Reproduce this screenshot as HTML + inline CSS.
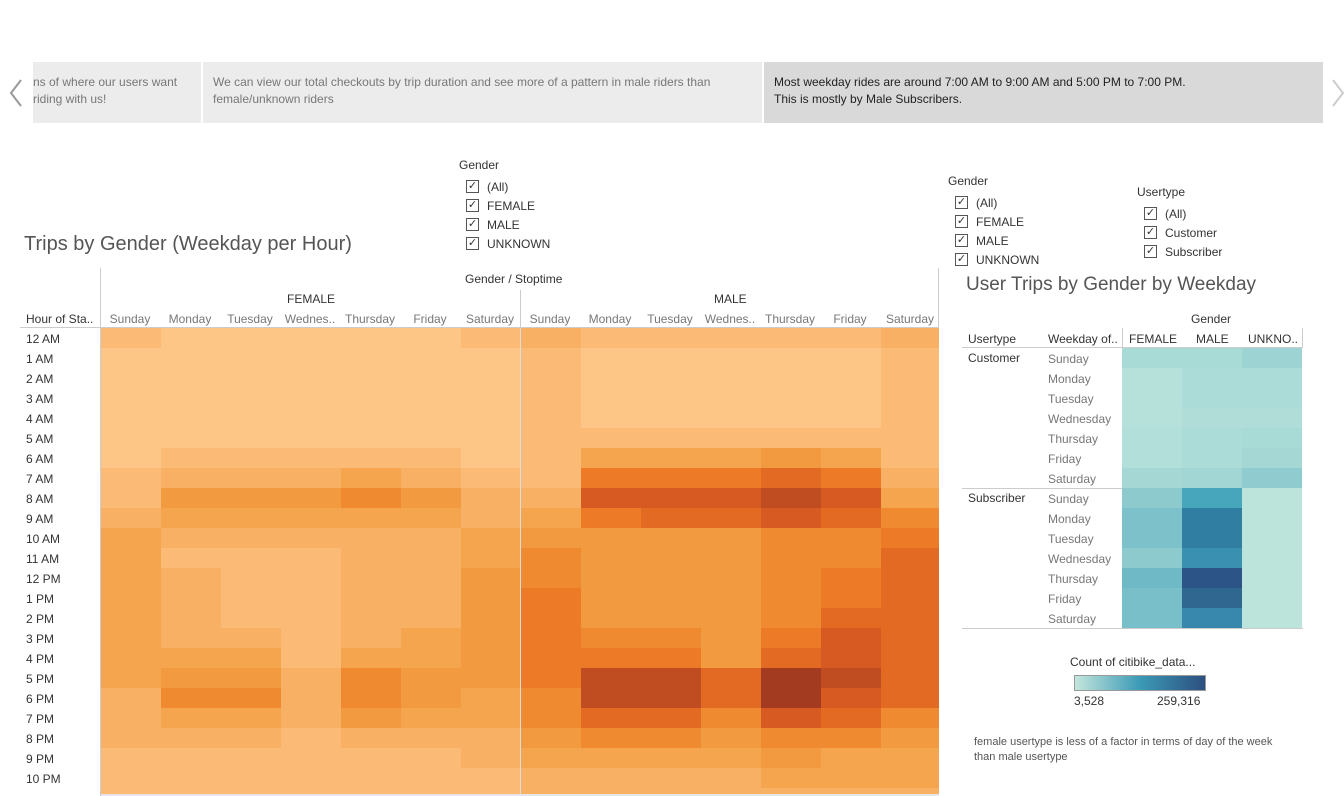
<!DOCTYPE html>
<html><head><meta charset="utf-8"><style>
*{margin:0;padding:0;box-sizing:border-box}
body{width:1344px;height:796px;background:#fff;font-family:"Liberation Sans",sans-serif;position:relative;overflow:hidden;color:#333}
.a{position:absolute;white-space:nowrap}
.s{font-size:12px;color:#333}
.g{font-size:12px;color:#777}
.cb{position:absolute;width:13px;height:13px;border:1px solid #555;background:#fff;font-size:11px;line-height:11px;text-align:center;color:#333}
.cell{position:absolute}
</style></head><body>
<div class="a" style="left:33px;top:62px;width:168px;height:61px;background:#ececec"></div>
<div class="a" style="left:203px;top:62px;width:559px;height:61px;background:#ececec"></div>
<div class="a" style="left:764px;top:62px;width:559px;height:61px;background:#d9d9d9"></div>
<svg class="a" style="left:8px;top:78px" width="16" height="30"><path d="M13 2 L3 15 L13 28" stroke="#999" stroke-width="2" fill="none"/></svg>
<svg class="a" style="left:1330px;top:78px" width="16" height="30"><path d="M3 2 L13 15 L3 28" stroke="#ccc" stroke-width="2" fill="none"/></svg>
<div class="a g" style="left:33px;top:74px;line-height:17px;width:165px;overflow:hidden">ns of where our users want<br>riding with us!</div>
<div class="a g" style="left:213px;top:74px;line-height:17px">We can view our total checkouts by trip duration and see more of a pattern in male riders than<br>female/unknown riders</div>
<div class="a s" style="left:774px;top:74px;line-height:17px;color:#222">Most weekday rides are around 7:00 AM to 9:00 AM and 5:00 PM to 7:00 PM.<br>This is mostly by Male Subscribers.</div>

<div class="a" style="left:24px;top:233px;font-size:20px;color:#555">Trips by Gender (Weekday per Hour)</div>
<div class="a s" style="left:459px;top:158px">Gender</div>
<div id="f1"></div>
<div class="a s" style="left:948px;top:174px">Gender</div>
<div class="a s" style="left:1137px;top:185px">Usertype</div>
<div class="a" style="left:966px;top:274px;font-size:19px;color:#555">User Trips by Gender by Weekday</div>

<div class="a s" style="left:465px;top:272px">Gender / Stoptime</div>
<div class="a" style="left:100px;top:268px;width:1px;height:60px;background:#ccc"></div>
<div class="a" style="left:520px;top:290px;width:1px;height:38px;background:#ccc"></div>
<div class="a" style="left:938px;top:268px;width:1px;height:60px;background:#ccc"></div>
<div class="a s" style="left:287px;top:292px">FEMALE</div>
<div class="a s" style="left:714px;top:292px">MALE</div>
<div class="a s" style="left:26px;top:312px">Hour of Sta..</div>
<div class="a" style="left:20px;top:327px;width:918px;height:1px;background:#ccc"></div>
<div id="hm"></div>

<div class="a s" style="left:1191px;top:312px">Gender</div>
<div class="a s" style="left:968px;top:332px">Usertype</div>
<div class="a s" style="left:1048px;top:332px">Weekday of..</div>
<div class="a s" style="left:1129px;top:332px">FEMALE</div>
<div class="a s" style="left:1196px;top:332px">MALE</div>
<div class="a s" style="left:1248px;top:332px">UNKNO..</div>
<div class="a" style="left:962px;top:347px;width:340px;height:1px;background:#ccc"></div>
<div class="a" style="left:1122px;top:328px;width:1px;height:20px;background:#ccc"></div>
<div class="a" style="left:1302px;top:328px;width:1px;height:20px;background:#ccc"></div>
<div class="a s" style="left:968px;top:351px">Customer</div>
<div class="a s" style="left:968px;top:491px">Subscriber</div>
<div class="a" style="left:962px;top:488px;width:160px;height:1px;background:#ccc"></div>
<div class="a" style="left:962px;top:628px;width:341px;height:1px;background:#ccc"></div>
<div id="ut"></div>

<div class="a s" style="left:1070px;top:655px">Count of citibike_data...</div>
<div class="a" style="left:1074px;top:675px;width:132px;height:16px;border:1px solid #999;background:linear-gradient(to right,#c3e6dc,#3b9ab6,#2c4f80)"></div>
<div class="a s" style="left:1074px;top:694px">3,528</div>
<div class="a s" style="left:1157px;top:694px">259,316</div>
<div class="a" style="left:974px;top:735px;font-size:11px;color:#555;line-height:15px">female usertype is less of a factor in terms of day of the week<br>than male usertype</div>

<script>
function cbs(x,y,labels){var h='';labels.forEach(function(l,i){h+='<div class="cb" style="left:'+x+'px;top:'+(y+i*19)+'px">&#10003;</div><div class="a s" style="left:'+(x+21)+'px;top:'+(y+i*19)+'px">'+l+'</div>';});return h;}
var out='';
out+=cbs(466,180,['(All)','FEMALE','MALE','UNKNOWN']);
out+=cbs(955,196,['(All)','FEMALE','MALE','UNKNOWN']);
out+=cbs(1144,207,['(All)','Customer','Subscriber']);
document.getElementById('f1').innerHTML=out;

var C=['#fdc586','#fbbb77','#f8b064','#f5a54e','#f29a3f','#f08a30','#ec7a26','#e26a22','#d65a22','#c04c22','#a33b20'];
var F=[[1,0,0,0,0,0,1],[0,0,0,0,0,0,0],[0,0,0,0,0,0,0],[0,0,0,0,0,0,0],[0,0,0,0,0,0,0],[0,0,0,0,0,0,0],[0,1,1,1,1,1,0],[1,2,2,2,3,2,1],[1,4,4,4,5,4,2],[2,3,3,3,3,3,2],[3,2,2,2,2,2,3],[3,1,1,1,2,2,3],[3,2,1,1,2,2,4],[3,2,1,1,2,2,4],[3,2,1,1,2,2,4],[3,2,2,1,2,3,4],[3,3,3,1,3,3,4],[3,4,4,2,5,4,4],[2,5,5,2,5,4,3],[2,3,3,2,4,3,3],[2,2,2,1,2,2,2],[1,1,1,1,1,1,2],[1,1,1,1,1,1,1],[1,1,1,1,1,1,1]];
var M=[[2,1,1,1,1,1,2],[1,0,0,0,0,0,1],[1,0,0,0,0,0,1],[1,0,0,0,0,0,1],[1,0,0,0,0,0,1],[1,1,1,1,1,1,1],[1,3,3,3,4,3,1],[1,6,6,6,7,6,2],[2,8,8,8,9,8,3],[3,6,7,7,8,7,5],[4,4,4,4,5,5,6],[5,4,4,4,5,5,7],[5,4,4,4,5,6,7],[6,4,4,4,5,6,7],[6,4,4,4,5,7,7],[6,5,5,4,6,8,7],[6,6,6,4,7,8,7],[6,9,9,7,10,9,7],[5,9,9,7,10,8,7],[5,7,7,5,8,7,5],[4,5,5,4,5,5,4],[3,3,3,3,4,3,3],[2,2,2,2,3,3,3],[2,2,2,2,2,2,2]];
var days=['Sunday','Monday','Tuesday','Wednes..','Thursday','Friday','Saturday'];
var hrs=['12 AM','1 AM','2 AM','3 AM','4 AM','5 AM','6 AM','7 AM','8 AM','9 AM','10 AM','11 AM','12 PM','1 PM','2 PM','3 PM','4 PM','5 PM','6 PM','7 PM','8 PM','9 PM','10 PM'];
var h='';
for(var d=0;d<7;d++){h+='<div class="a g" style="left:'+(101+d*60)+'px;top:312px;width:58px;text-align:center">'+days[d]+'</div>';h+='<div class="a g" style="left:'+(521+d*60)+'px;top:312px;width:58px;text-align:center">'+days[d]+'</div>';}
for(var r=0;r<24;r++){var y=328+r*20,ht=(r==23?6:20);
 if(r<23)h+='<div class="a s" style="left:26px;top:'+(y+4)+'px">'+hrs[r]+'</div>';
 for(var d=0;d<7;d++){h+='<div class="cell" style="left:'+(101+d*60)+'px;top:'+y+'px;width:60px;height:'+ht+'px;background:'+C[F[r][d]]+'"></div>';
 h+='<div class="cell" style="left:'+(521+d*60)+'px;top:'+y+'px;width:'+(d==6?58:60)+'px;height:'+ht+'px;background:'+C[M[r][d]]+'"></div>';}}
h+='<div class="a" style="left:520px;top:328px;width:1px;height:466px;background:#ddd"></div>';
h+='<div class="a" style="left:100px;top:328px;width:1px;height:468px;background:#ccc"></div>';
h+='<div class="a" style="left:101px;top:794px;width:838px;height:2px;background:#e6e6e6"></div>';
document.getElementById('hm').innerHTML=h;

var wd=['Sunday','Monday','Tuesday','Wednesday','Thursday','Friday','Saturday'];
var U=[['#a8dad6','#a8dad6','#9dd3d2'],['#b5e1da','#acdcd7','#acdcd7'],['#b5e1da','#acdcd7','#acdcd7'],['#b5e1da','#b0ddd8','#b0ddd8'],['#b2dfd9','#acdcd7','#a8dad6'],['#b2dfd9','#acdcd7','#a5d8d5'],['#a5d8d5','#a2d6d4','#8fcbcf'],
['#8ccace','#47a5bc','#bce4da'],['#7dc2ca','#317ea3','#bce4da'],['#7dc2ca','#317ea3','#bce4da'],['#8ccace','#3a90b0','#bce4da'],['#6fb9c7','#2c5486','#bce4da'],['#78bfc9','#2f6791','#bce4da'],['#78bfc9','#3888ad','#bce4da']];
var u='';
for(var i=0;i<14;i++){var y=348+i*20;u+='<div class="a g" style="left:1048px;top:'+(y+4)+'px">'+wd[i%7]+'</div>';
 for(var c=0;c<3;c++)u+='<div class="cell" style="left:'+(1122+c*60)+'px;top:'+y+'px;width:60px;height:20px;background:'+U[i][c]+'"></div>';}
document.getElementById('ut').innerHTML=u;
</script>
</body></html>
